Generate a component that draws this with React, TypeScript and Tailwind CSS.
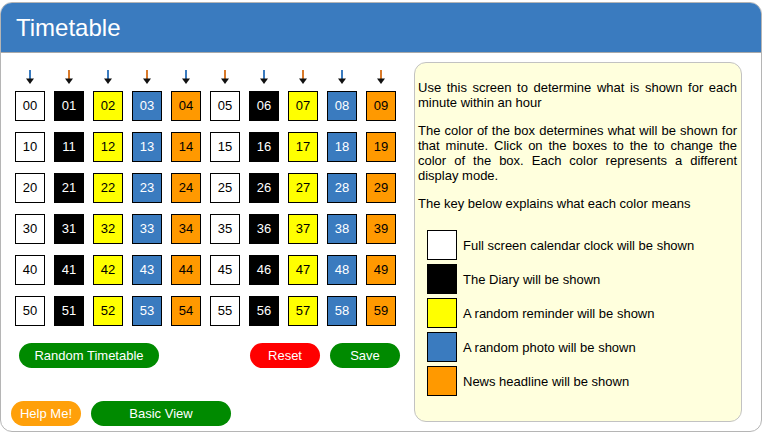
const COLORS = [
  "bg-white text-black",
  "bg-black text-white",
  "bg-[#ffff00] text-black",
  "bg-[#3a7bbf] text-white",
  "bg-[#ff9900] text-black",
];

const LEGEND = [
  { cls: "bg-white", label: "Full screen calendar clock will be shown" },
  { cls: "bg-black", label: "The Diary will be shown" },
  { cls: "bg-[#ffff00]", label: "A random reminder will be shown" },
  { cls: "bg-[#3a7bbf]", label: "A random photo will be shown" },
  { cls: "bg-[#ff9900]", label: "News headline will be shown" },
];

function Arrow({ orange }: { orange: boolean }) {
  return (
    <svg width="12" height="14" viewBox="0 0 12 14">
      <line
        x1="6"
        y1="0"
        x2="6"
        y2="10"
        stroke={orange ? "#d97a2a" : "#3a7bbf"}
        strokeWidth="2"
      />
      <path d="M2 8.5 L10 8.5 L6 14 Z" fill="#111" />
    </svg>
  );
}

function Pill({ className, children }: { className: string; children: React.ReactNode }) {
  return (
    <button
      className={`h-[25px] rounded-full text-white text-[13px] leading-none flex items-center justify-center ${className}`}
    >
      {children}
    </button>
  );
}

export default function App() {
  const cells = Array.from({ length: 60 }, (_, i) => i);
  return (
    <div
      className="w-[763px] h-[434px] bg-white pt-[2px]"
      style={{ fontFamily: '"Liberation Sans", Arial, sans-serif' }}
    >
      <div className="w-[762px] h-[430px] border border-[#b5b5b5] rounded-[12px] overflow-hidden flex flex-col">
        <div className="h-[50px] bg-[#3a7bbf] border-b border-[#a9a9a9] flex items-center pl-[15px] text-white text-[24px]">
          Timetable
        </div>
        <div className="flex flex-1">
          <div className="w-[413px] pl-[14px] flex flex-col">
            <div className="grid grid-cols-[repeat(10,30px)] gap-x-[9px] mt-[17px] h-[14px]">
              {cells.slice(0, 10).map((i) => (
                <div key={i} className="flex justify-center">
                  <Arrow orange={i % 2 === 1} />
                </div>
              ))}
            </div>
            <div className="grid grid-cols-[repeat(10,30px)] gap-x-[9px] gap-y-[11px] mt-[7px]">
              {cells.map((i) => (
                <div
                  key={i}
                  className={`w-[30px] h-[30px] border-[1.5px] border-black flex items-center justify-center text-[13px] ${COLORS[i % 5]}`}
                >
                  {String(i).padStart(2, "0")}
                </div>
              ))}
            </div>
            <div className="flex items-center mt-[17px] pl-[4px] w-[385px]">
              <Pill className="w-[140px] bg-[#008a00]">Random Timetable</Pill>
              <div className="flex-1" />
              <Pill className="w-[70px] bg-[#ff0000]">Reset</Pill>
              <Pill className="w-[70px] bg-[#008a00] ml-[10px]">Save</Pill>
            </div>
            <div className="flex items-center gap-[10px] mt-[33px] -ml-[4px]">
              <Pill className="w-[70px] bg-[#ffa00a]">Help Me!</Pill>
              <Pill className="w-[140px] bg-[#008a00]">Basic View</Pill>
            </div>
          </div>
          <div className="mt-[9px] w-[328px] h-[360px] bg-[#ffffdd] border border-[#c2c2c2] rounded-[12px] px-[3px] pt-[17px] text-[13px] leading-[15px] text-black">
            <p className="text-justify pr-[1px]">
              Use this screen to determine what is shown for each minute within an hour
            </p>
            <p className="text-justify mt-[13px] pr-[1px]">
              The color of the box determines what will be shown for that minute. Click on the
              boxes to the to change the color of the box. Each color represents a different
              display mode.
            </p>
            <p className="mt-[13px]">The key below explains what each color means</p>
            <div className="flex flex-col gap-[4px] mt-[19px] pl-[9px]">
              {LEGEND.map((l) => (
                <div key={l.label} className="flex items-center gap-[6px]">
                  <div className={`w-[30px] h-[30px] border-[1.5px] border-black ${l.cls}`} />
                  <span>{l.label}</span>
                </div>
              ))}
            </div>
          </div>
        </div>
      </div>
    </div>
  );
}
